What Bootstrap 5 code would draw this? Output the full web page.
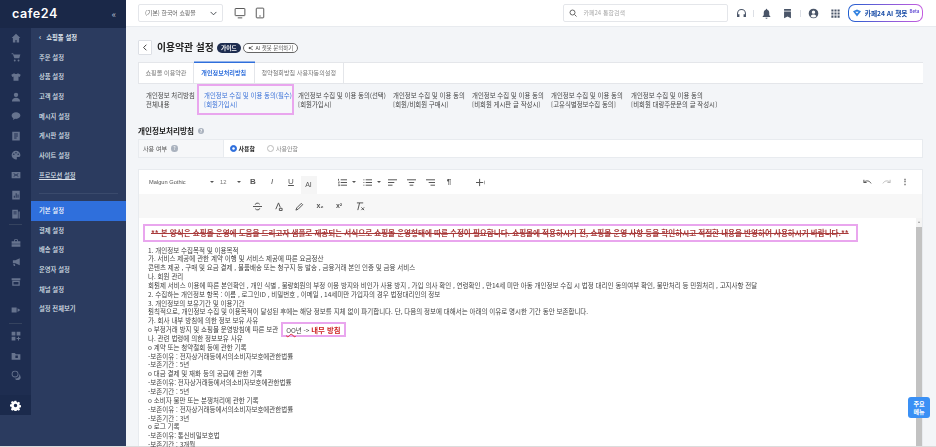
<!doctype html>
<html lang="ko"><head><meta charset="utf-8"><title>이용약관 설정</title>
<link href="https://cdn.jsdelivr.net/npm/bootstrap@5.3.0/dist/css/bootstrap.min.css" rel="stylesheet">
<style>
html,body{height:100%;overflow:hidden}
body{font-family:"Noto Sans CJK KR","Noto Sans",sans-serif;font-size:6.5px;color:#333;background:#f3f5f8;line-height:1.2}
.shell{height:447px;width:936px;border-bottom:1px solid #dcdcdc;filter:blur(.3px)}
.side{width:126px;flex:none;background:#2b3b5f;color:#e6eaf2}
.side-top{height:28px;background:#1a2848;padding:0 10px 0 12px;flex:none}
.logo{font-family:Inter,"Liberation Sans",sans-serif;font-weight:600;font-size:12.6px;letter-spacing:.5px;color:#fff;line-height:1}
.collapse-mark{font-size:9px;color:#b8c0d0;line-height:1}
.side-body{height:419px}
.rail{width:31px;flex:none}
.rail-in{height:367px;background:#1e2d50}
.rail-i{height:19.6px;color:#66738e}
.rail-i svg{width:10px;height:10px;fill:currentColor}
.rail-sep{height:0;border-top:1px solid #35435f;margin:0 9px}
.ri-a{margin-top:8px}.ri-b{margin-top:8px}
.rail-sep.rs-2{margin:4px 9px 2px}
.gear-i{height:20px;background:#1b2a4c;color:#fff}
.gear-i svg{width:11px;height:11px;fill:#fff}
.menu{flex:1}
.menu .list-group-item{background:transparent;border:0;color:#dfe4ec;font-size:6.3px;line-height:19.7px;height:19.7px;padding:0 0 0 8px;font-weight:500;border-radius:0}
.menu .list-group-item.head{font-weight:700}
.menu .list-group-item.now{background:#2f6fdc;color:#fff;height:20px;line-height:20px}
.menu-sep{border-top:1px solid #3a4a6c;margin:7px 8px}
.chev{display:inline-block;margin-right:5px;font-size:7px}
.main-col{min-width:0}
.topbar{height:27px;background:#fff;border-bottom:1px solid #e8ebef;padding:0 13px 0 12px;flex:none}
.shop-sel.form-select{width:85px;height:18px;min-height:0;font-size:5.9px;padding:0 0 0 6px;border-color:#e4e6ea;border-radius:2px;color:#666;background-size:7px;background-position:right 5px center;flex:none}
.dev{color:#555;width:12px;height:12px}
.dev-a{margin:0 8px 0 11px}
.find{width:165px;height:18px;border:1px solid #e4e6ea;border-radius:2px;padding-left:5px;color:#aaa;font-size:6px;background:#fff}
.find span{margin-left:3px}
.t-i{color:#4a5568;width:11px;height:11px;fill:currentColor;flex:none}
.t-line{width:1px;height:7px;background:#dcdfe5;flex:none}
.m8{margin-left:8px}.m6{margin-left:6px}.m7{margin-left:7px}.m10{margin-left:10px}.m11{margin-left:11px}.m75{margin-left:7.5px}
.aibot{width:75px;height:18px;border-radius:7px;border:1.5px solid transparent;background:linear-gradient(#fff,#fff) padding-box,linear-gradient(90deg,#1f5fd0,#7f5cd8,#c45ce0) border-box;color:#1c4fa8;font-weight:700;font-size:6.7px;padding:0;white-space:nowrap;flex:none;gap:3px}
.aibot sup{font-size:4.4px;color:#6b55d6;top:-.6em;font-weight:700}
.body-wrap{padding:0 13.5px 0 12px;min-height:0}
.head-row{height:35px;padding-top:6px;flex:none}
.back.btn{width:14px;height:15px;padding:0;background:#fff;border:1px solid #dcdfe5;border-radius:1px}
.title{font-size:9.8px;font-weight:700;margin:0 3px 0 5px;color:#222;line-height:15px}
.guide.badge{background:#1e2d50;font-size:5.7px;padding:0 5px;height:10px;line-height:10px;font-weight:700;width:24px;display:flex;align-items:center;justify-content:center}
.aiask.btn{height:10px;width:55px;padding:0;font-size:5.4px;line-height:8px;border:1px solid #666;border-radius:6px;color:#555;background:#fff;margin-left:2px;white-space:nowrap;gap:2px}
.tabset.nav-tabs{background:#fff;height:22px;border:0;border-top:1px solid #e4e6ea;border-bottom:1px solid #e4e6ea;flex-wrap:nowrap;flex:none}
.tabset .nav-link{height:20px;font-size:6.1px;padding:0;margin:0;border:0;border-right:1px solid #e4e6ea;border-radius:0;color:#777;text-align:center;line-height:20px;background:#fff}
.tabset .nav-link:first-child{border-left:1px solid #e4e6ea}
.tabset .nav-link.active{color:#2f6fdc;font-weight:700;box-shadow:0 -1.5px 0 #2f6fdc;background:#fff;border-color:#e4e6ea}
.w-a{width:56px}.w-b{width:60.5px}.w-c{width:89.5px}
.subtabs{height:31px;flex:none}
.subt{font-size:6.4px;line-height:9px;color:#444;padding-top:7px;white-space:nowrap;flex:none}
.subt.on{color:#3a72d8;border:2px solid #e9a6ee;padding:5px 0 0 5px;height:31px;width:97px;background:#f6f7fa}
.st-a{margin-left:8px;width:51px}.st-b{margin-left:4px;width:95px}.st-c{width:79px}.st-d{width:80px}
.sec-title{font-size:7.6px;font-weight:700;color:#222;margin:8px 0 0;height:16px;line-height:12px;flex:none}
.hlp{width:6.5px;height:6.5px;border-radius:50%;background:#aab2be;color:#fff;font-size:5px;line-height:6.5px;text-align:center;font-style:normal;flex:none}
.opt-row{height:18.5px;background:#fff;border:1px solid #e8ebef;flex:none}
.opt-label{width:85px;background:#f6f7f9;padding-left:4px;border-right:1px solid #e8ebef;color:#555;font-size:6.1px;flex:none}
.opt-row .form-check{margin:0;padding:0;min-height:0;display:flex;align-items:center;gap:2px;font-size:6px;color:#888}
.opt-row .form-check-input{float:none;margin:0;width:7px;height:7px;border-color:#bbb}
.opt-row .form-check-input:checked{background-color:#2f6fdc;border-color:#2f6fdc}
.opt-row .form-check.sel{font-weight:700;color:#222;margin-left:5.5px}
.opt-row .form-check.unsel{margin-left:12px}
.editor{margin-top:11.5px;background:#fff;border:1px solid #e8ebef;border-bottom:0;flex:1;min-height:0;width:785px}
.bar1{height:24px;padding:0 7.5px 0 10px;flex:none}
.bar2{height:24px;background:#f7f7f7;padding-left:108.5px;flex:none}
.tb{color:#555;display:flex;align-items:center;justify-content:center;flex:none;height:12px;font-size:8px;width:19px;font-family:"Liberation Sans",sans-serif}
.tb svg{width:9px;height:9px;fill:none;stroke:currentColor;stroke-width:1.1}
.tb-b{font-weight:700}.tb-i{font-style:italic}.tb-u{text-decoration:underline}
.tb-off{color:#bbb}
.tb-s{font-size:7px}
.g2{margin-left:2px}.g25{margin-left:2.5px}.g12{margin-left:12px}
.fontname{width:61px;font-family:"Liberation Sans",sans-serif;font-size:5.7px;color:#555;flex:none}
.car{width:0;height:0;border:2px solid transparent;border-top:2.5px solid #555;border-bottom:0;flex:none}
.size12{width:17px;margin-left:6px;font-size:5.8px;color:#777;font-family:"Liberation Sans",sans-serif;flex:none}
.ai-on{height:18px;width:16px;background:#f5f5f5;align-self:flex-end;font-size:7px}
.edit-wrap{min-height:0}
.doc{flex:1;min-width:0;padding:6px 0 0 4px;font-size:6.5px;color:#3f3f3f;height:230px}
.alert-line{border:2px solid #e9a6ee;height:18px;width:715px;padding-left:6px;font-size:7.55px;font-weight:700;color:#a83a3a;line-height:14px;white-space:nowrap;text-decoration:line-through;margin-bottom:3.5px}
.doc p{margin:0 0 0 5px;line-height:8.85px;height:8.85px;white-space:nowrap}
.inl{border:2px solid #e9a6ee;padding:.5px 3px;background:#fff;margin-left:1px}
.inl u{text-decoration:underline wavy #d33}
.inl b{color:#c22;font-size:7.4px}
.sbar{width:6px;flex:none;background:#f4f4f4;padding-top:8.5px;position:relative}
.sbar i{display:block;height:100%;background:#c2c2c2}
.sbar em{position:absolute;top:3px;left:1.5px;width:0;height:0;border:1.5px solid transparent;border-bottom:2px solid #999;border-top:0}
.quick.btn{position:absolute;left:908px;top:397px;width:22px;height:21px;padding:0;background:#3a90f5;border:0;border-radius:3px;color:#fff;font-size:6.1px;line-height:7.4px;font-weight:700}
</style></head><body>
<svg width="0" height="0" class="d-none"><defs>
<symbol id="i-home" viewBox="0 0 16 16"><path d="M8 1 1 8h2v7h4v-4h2v4h4V8h2z"/></symbol>
<symbol id="i-cart" viewBox="0 0 16 16"><path d="M1 2h2.500l.6 2H15l-1.800 6H5.300L3 3.500H1zM6 12a1.500 1.500 0 1 0 0 3 1.500 1.500 0 0 0 0-3zm6 0a1.500 1.500 0 1 0 0 3 1.500 1.500 0 0 0 0-3z"/></symbol>
<symbol id="i-shirt" viewBox="0 0 16 16"><path d="M5 2 0.500 4.500 2 8l2-1v7h8V7l2 1 1.500-3.500L11 2c-.5 1.500-5.500 1.500-6 0z"/></symbol>
<symbol id="i-user" viewBox="0 0 16 16"><circle cx="8" cy="4.500" r="3.500"/><path d="M1.500 15c0-4 3-6 6.500-6s6.500 2 6.500 6z"/></symbol>
<symbol id="i-chat" viewBox="0 0 16 16"><path d="M8 2C4 2 1 4.300 1 7.300c0 1.800 1.100 3.300 2.800 4.300L3 14.500l3.500-2c.5.100 1 .1 1.500.1 4 0 7-2.400 7-5.300S12 2 8 2z"/></symbol>
<symbol id="i-board" viewBox="0 0 16 16"><path fill-rule="evenodd" d="M2 1h12v14H2zm3 3v1.500h6V4zm0 3.200v1.500h6V7.200zm0 3.200v1.500h4v-1.500z"/></symbol>
<symbol id="i-pal" viewBox="0 0 16 16"><path fill-rule="evenodd" d="M8 1a7 7 0 0 0 0 14c1.500 0 1.800-1 1.300-2-.5-1 0-2 1.200-2H13c1.300 0 2-1 2-3a7 7 0 0 0-7-7zM4.500 8a1.200 1.200 0 1 1 0-2.400 1.200 1.200 0 0 1 0 2.400zM8 5.500a1.200 1.200 0 1 1 0-2.400 1.200 1.200 0 0 1 0 2.400zm3.500 2.500a1.200 1.200 0 1 1 0-2.400 1.200 1.200 0 0 1 0 2.400z"/></symbol>
<symbol id="i-tick" viewBox="0 0 16 16"><path fill-rule="evenodd" d="M1 3h14v10H1zm2.500 2.500 3 2.500-3 2.500h1.800L8 8.500l2.700 2H12.500l-3-2.500 3-2.500h-1.800L8 7.500l-2.700-2z"/></symbol>
<symbol id="i-chart" viewBox="0 0 16 16"><path fill-rule="evenodd" d="M2 1h12v14H2zm2.500 8v3.500H6V9zm3-4v7.500H9V5zm3 2v5.500H12V7z"/></symbol>
<symbol id="i-store" viewBox="0 0 16 16"><path fill-rule="evenodd" d="M2 1h9v14H2zm2 3v1.500h5V4zm0 3v1.500h5V7zm8-3h2v11h-2z"/></symbol>
<symbol id="i-bag" viewBox="0 0 16 16"><path d="M5.500 2h5l1 3H15v4H1V5h3.500zM6.500 3.300 6 5h4l-.5-1.700zM1 10h14v4H1z"/></symbol>
<symbol id="i-horn" viewBox="0 0 16 16"><path d="M14 2v11L7 10H3V5h4zM3.500 11h2.500l.8 3.500H4.500z"/></symbol>
<symbol id="i-win" viewBox="0 0 16 16"><path fill-rule="evenodd" d="M1 2h14v3H1zM2 6h12v8H2zm2 2v4h8V8z"/></symbol>
<symbol id="i-arrow" viewBox="0 0 16 16"><path d="M1 4h8v8H1zM10.500 5 15 8l-4.500 3z"/></symbol>
<symbol id="i-plus" viewBox="0 0 16 16"><path d="M1 1h6v6H1zM9 1h6v6H9zM1 9h6v6H1zM11.200 9h1.600v2.200H15v1.600h-2.200V15h-1.600v-2.200H9v-1.600h2.200z"/></symbol>
<symbol id="i-fold" viewBox="0 0 16 16"><path fill-rule="evenodd" d="M1 3h5l2 2h7v9H1zm6 4v4h4V7z"/></symbol>
<symbol id="i-chk" viewBox="0 0 16 16"><path fill-rule="evenodd" d="M6.500 1a5.500 5.500 0 1 0 0 11 5.500 5.500 0 0 0 0-11zm0 1.500a4 4 0 1 1 0 8 4 4 0 0 1 0-8zM13 6.500a5.500 5.500 0 0 1-6.500 7A4.500 4.500 0 0 0 15 10a4.500 4.500 0 0 0-2-3.500z"/></symbol>
<symbol id="i-gear" viewBox="0 0 16 16"><path fill-rule="evenodd" d="M6.700 1h2.600l.4 2 1.300.6 1.800-1.100 1.800 1.800-1.100 1.800.6 1.300 2 .4v2.600l-2 .4-.6 1.300 1.100 1.800-1.800 1.800-1.800-1.100-1.300.6-.4 2H6.700l-.4-2-1.300-.6-1.800 1.100-1.800-1.800L2.500 11l-.6-1.300-2-.4V6.700l2-.4.6-1.300-1.100-1.800 1.800-1.800L5 2.500l1.300-.6zM8 5.500a2.500 2.500 0 1 0 0 5 2.500 2.500 0 0 0 0-5z"/></symbol>
</defs></svg>

<div class="shell d-flex">
 <aside class="side d-flex flex-column">
  <div class="side-top d-flex align-items-center justify-content-between"><span class="logo">cafe24</span><span class="collapse-mark">«</span></div>
  <div class="side-body d-flex">
   <nav class="rail d-flex flex-column">
    <div class="rail-in d-flex flex-column">
     <div class="rail-i d-flex align-items-center justify-content-center"><svg><use href="#i-home"/></svg></div>
     <div class="rail-i d-flex align-items-center justify-content-center"><svg><use href="#i-cart"/></svg></div>
     <div class="rail-i d-flex align-items-center justify-content-center"><svg><use href="#i-shirt"/></svg></div>
     <div class="rail-i d-flex align-items-center justify-content-center"><svg><use href="#i-user"/></svg></div>
     <div class="rail-i d-flex align-items-center justify-content-center"><svg><use href="#i-chat"/></svg></div>
     <div class="rail-i d-flex align-items-center justify-content-center"><svg><use href="#i-board"/></svg></div>
     <div class="rail-i d-flex align-items-center justify-content-center"><svg><use href="#i-pal"/></svg></div>
     <div class="rail-i d-flex align-items-center justify-content-center"><svg><use href="#i-tick"/></svg></div>
     <div class="rail-i d-flex align-items-center justify-content-center"><svg><use href="#i-chart"/></svg></div>
     <div class="rail-i d-flex align-items-center justify-content-center"><svg><use href="#i-store"/></svg></div>
     <div class="rail-sep"></div>
     <div class="rail-i ri-a d-flex align-items-center justify-content-center"><svg><use href="#i-bag"/></svg></div>
     <div class="rail-i d-flex align-items-center justify-content-center"><svg><use href="#i-horn"/></svg></div>
     <div class="rail-i d-flex align-items-center justify-content-center"><svg><use href="#i-win"/></svg></div>
     <div class="rail-i ri-b d-flex align-items-center justify-content-center"><svg><use href="#i-arrow"/></svg></div>
     <div class="rail-sep rs-2"></div>
     <div class="rail-i d-flex align-items-center justify-content-center"><svg><use href="#i-plus"/></svg></div>
     <div class="rail-i d-flex align-items-center justify-content-center"><svg><use href="#i-fold"/></svg></div>
     <div class="rail-i d-flex align-items-center justify-content-center"><svg><use href="#i-chk"/></svg></div>
    </div>
    <div class="gear-i d-flex align-items-center justify-content-center"><svg><use href="#i-gear"/></svg></div>
   </nav>
   <div class="menu list-group list-group-flush">
    <a class="list-group-item head"><span class="chev">‹</span>쇼핑몰 설정</a>
    <a class="list-group-item">주문 설정</a>
    <a class="list-group-item">상품 설정</a>
    <a class="list-group-item">고객 설정</a>
    <a class="list-group-item">메시지 설정</a>
    <a class="list-group-item">게시판 설정</a>
    <a class="list-group-item">사이트 설정</a>
    <a class="list-group-item"><u>프로모션 설정</u></a>
    <div class="menu-sep"></div>
    <a class="list-group-item now">기본 설정</a>
    <a class="list-group-item">결제 설정</a>
    <a class="list-group-item">배송 설정</a>
    <a class="list-group-item">운영자 설정</a>
    <a class="list-group-item">채널 설정</a>
    <a class="list-group-item">설정 전체보기</a>
   </div>
  </div>
 </aside>
 <div class="main-col flex-grow-1 d-flex flex-column">
  <header class="topbar d-flex align-items-center">
   <select class="shop-sel form-select"><option>(기본) 한국어 쇼핑몰</option></select>
   <svg class="dev dev-a" viewBox="0 0 16 16" fill="none" stroke="currentColor" stroke-width="1.300"><rect x="1.500" y="2" width="13" height="9.500" rx=".5"/><path d="M5 14.500h6"/></svg>
   <svg class="dev" viewBox="0 0 16 16" fill="none" stroke="currentColor" stroke-width="1.300"><rect x="3" y="1.500" width="10" height="13" rx="1"/><path d="M7 12h2"/></svg>
   <div class="find d-flex align-items-center gap-1 ms-auto"><svg width="8" height="8" viewBox="0 0 16 16" fill="none" stroke="#666" stroke-width="2"><circle cx="7" cy="7" r="5"/><path d="m11 11 4 4"/></svg><span>카페24 통합검색</span></div>
   <svg class="t-i m8" viewBox="0 0 16 16"><path d="M8 1.500A6.500 6.500 0 0 0 1.500 8v5H5V9H3V8a5 5 0 0 1 10 0v1h-2v4h3.500V8A6.500 6.500 0 0 0 8 1.500z"/></svg>
   <span class="t-line m6"></span>
   <svg class="t-i m7" viewBox="0 0 16 16"><path d="M8 1a1 1 0 0 0-1 1v.6C5 3 4 4.800 4 7v3.500L2.500 12v1h11v-1L12 10.500V7c0-2.200-1-4-3-4.400V2a1 1 0 0 0-1-1zM6.500 14a1.500 1.500 0 0 0 3 0z"/></svg>
   <svg class="t-i m10" viewBox="0 0 16 16"><path d="M3 1.500h10V4H3zM3 5h10v10l-5-2.500L3 15z"/></svg>
   <span class="t-line m7"></span>
   <svg class="t-i m7" viewBox="0 0 16 16"><path fill-rule="evenodd" d="M8 1a7 7 0 1 0 0 14A7 7 0 0 0 8 1zm0 2.500A2.500 2.500 0 1 1 8 8.500a2.500 2.500 0 0 1 0-5zM3.800 12c.6-1.600 2.400-2.500 4.200-2.500s3.600.9 4.200 2.500a5.800 5.800 0 0 1-8.400 0z"/></svg>
   <svg class="t-i m11" viewBox="0 0 16 16"><path d="M2 2h3v3H2zM6.500 2h3v3h-3zM11 2h3v3h-3zM2 6.500h3v3H2zM6.500 6.500h3v3h-3zM11 6.500h3v3h-3zM2 11h3v3H2zM6.500 11h3v3h-3zM11 11h3v3h-3z"/></svg>
   <button class="aibot btn d-flex align-items-center justify-content-center m75"><svg width="10" height="8" viewBox="0 0 16 14"><path d="M1 4 8 1l7 3-7 9z" fill="#2d7fe0"/><path d="M5 5h6L8 8z" fill="#fff"/></svg><span>카페24 AI 챗봇 <sup>Beta</sup></span></button>
  </header>
  <main class="body-wrap flex-grow-1 d-flex flex-column">
   <div class="head-row d-flex align-items-center">
    <button class="back btn d-flex align-items-center justify-content-center"><svg width="6" height="7" viewBox="0 0 8 10" fill="none" stroke="#333" stroke-width="1.300"><path d="M6 1 2 5l4 4"/></svg></button>
    <h1 class="title">이용약관 설정</h1>
    <span class="guide badge rounded-pill">가이드</span>
    <button class="aiask btn d-flex align-items-center justify-content-center"><svg width="6" height="6" viewBox="0 0 10 10" fill="none" stroke="#444" stroke-width="1.200"><path d="M8 2 2.500 5 8 8"/><circle cx="2.500" cy="5" r="1" fill="#444"/></svg><span>AI 챗봇 문의하기</span></button>
   </div>
   <ul class="tabset nav nav-tabs">
    <li class="nav-link w-a">쇼핑몰 이용약관</li>
    <li class="nav-link active w-b">개인정보처리방침</li>
    <li class="nav-link w-c">청약철회방침 사용자동의설정</li>
   </ul>
   <div class="subtabs d-flex">
    <div class="subt st-a">개인정보 처리방침<br>전체내용</div>
    <div class="subt on">개인정보 수집 및 이용 동의(필수)<br>[회원가입시]</div>
    <div class="subt st-b">개인정보 수집 및 이용 동의(선택)<br>[회원가입시]</div>
    <div class="subt st-c">개인정보 수집 및 이용 동의<br>[회원/비회원 구매시]</div>
    <div class="subt st-c">개인정보 수집 및 이용 동의<br>[비회원 게시판 글 작성시]</div>
    <div class="subt st-d">개인정보 수집 및 이용 동의<br>[고유식별정보수집 동의]</div>
    <div class="subt">개인정보 수집 및 이용 동의<br>[비회원 대량주문문의 글 작성시]</div>
   </div>
   <div class="sec-title d-flex align-items-center gap-1">개인정보처리방침 <i class="hlp">?</i></div>
   <div class="opt-row d-flex align-items-center">
    <div class="opt-label h-100 d-flex align-items-center gap-1">사용 여부 <i class="hlp">?</i></div>
    <div class="form-check sel"><input class="form-check-input" type="radio" name="u" id="u1" checked><label for="u1">사용함</label></div>
    <div class="form-check unsel"><input class="form-check-input" type="radio" name="u" id="u2"><label for="u2">사용안함</label></div>
   </div>
   <section class="editor d-flex flex-column">
    <div class="bar1 d-flex align-items-center">
     <span class="fontname">Malgun Gothic</span><span class="car"></span><span class="size12">12</span><span class="car"></span>
     <span class="tb tb-b g25">B</span><span class="tb tb-i">I</span><span class="tb tb-u">U</span><span class="tb ai-on">AI</span>
     <span class="tb ms-3"><svg viewBox="0 0 10 10"><path d="M3 2h7M3 5h7M3 8h7M.5 1v2M.5 4.500h1l-1 1h1M.5 7.500h1v1h-1"/></svg></span><span class="car"></span>
     <span class="tb g2"><svg viewBox="0 0 10 10"><path d="M3 2h7M3 5h7M3 8h7M.5 2h1M.5 5h1M.5 8h1"/></svg></span><span class="car"></span>
     <span class="tb g2"><svg viewBox="0 0 10 10"><path d="M0 2h10M0 5h7M0 8h5"/></svg></span>
     <span class="tb"><svg viewBox="0 0 10 10"><path d="M0 2h10M2 5h6M3 8h4"/></svg></span>
     <span class="tb"><svg viewBox="0 0 10 10"><path d="M0 2h10M3 5h7M5 8h5"/></svg></span>
     <span class="tb tb-b">¶</span>
     <span class="tb g12"><svg viewBox="0 0 10 10"><path d="M4 1v8M0 5h8M10 3v4"/></svg></span>
     <span class="tb ms-auto"><svg viewBox="0 0 10 10"><path d="M1 2v3h3M1 5c2-2.500 6-2.500 8 1"/></svg></span>
     <span class="tb tb-off"><svg viewBox="0 0 10 10"><path d="M9 2v3H6M9 5C7 2.500 3 2.500 1 6"/></svg></span>
     <span class="tb tb-b">⋮</span>
    </div>
    <div class="bar2 d-flex align-items-center">
     <span class="tb"><svg viewBox="0 0 10 10"><path d="M0 5h10M7.500 2.500C6 .5 2.500 1 2.500 3M2.500 7.500C4 9.500 7.500 9 7.500 7"/></svg></span>
     <span class="tb g2"><svg viewBox="0 0 10 10"><path d="M2 8 5 1l2 5M6 7h3v2.500H6z"/></svg></span>
     <span class="tb g2"><svg viewBox="0 0 10 10"><path d="M1 9 2 6.500 7 1.500l1.500 1.500-5 5z"/></svg></span>
     <span class="tb g2 tb-b tb-s">x₂</span>
     <span class="tb tb-b tb-s">x²</span>
     <span class="tb g2"><svg viewBox="0 0 10 10"><path d="M1 1h7M4 1l-2 8M6 6l3 3M9 6 6 9"/></svg></span>
    </div>
    <div class="edit-wrap d-flex flex-grow-1">
     <div class="doc">
      <div class="alert-line">** 본 양식은 쇼핑몰 운영에 도움을 드리고자 샘플로 제공되는 서식으로 쇼핑몰 운영형태에 따른 수정이 필요합니다. 쇼핑몰에 적용하시기 전, 쇼핑몰 운영 사항 등을 확인하시고 적절한 내용을 반영하여 사용하시기 바랍니다.**</div>
      <p>1. 개인정보 수집목적 및 이용목적</p>
      <p>가. 서비스 제공에 관한 계약 이행 및 서비스 제공에 따른 요금정산</p>
      <p>콘텐츠 제공 , 구매 및 요금 결제 , 물품배송 또는 청구지 등 발송 , 금융거래 본인 인증 및 금융 서비스</p>
      <p>나. 회원 관리</p>
      <p>회원제 서비스 이용에 따른 본인확인 , 개인 식별 , 불량회원의 부정 이용 방지와 비인가 사용 방지 , 가입 의사 확인 , 연령확인 , 만14세 미만 아동 개인정보 수집 시 법정 대리인 동의여부 확인, 불만처리 등 민원처리 , 고지사항 전달</p>
      <p>2. 수집하는 개인정보 항목 : 이름 , 로그인ID , 비밀번호 , 이메일 , 14세미만 가입자의 경우 법정대리인의 정보</p>
      <p>3. 개인정보의 보유기간 및 이용기간</p>
      <p>원칙적으로, 개인정보 수집 및 이용목적이 달성된 후에는 해당 정보를 지체 없이 파기합니다. 단, 다음의 정보에 대해서는 아래의 이유로 명시한 기간 동안 보존합니다.</p>
      <p>가. 회사 내부 방침에 의한 정보 보유 사유</p>
      <p>o 부정거래 방지 및 쇼핑몰 운영방침에 따른 보관 <span class="inl"><u>OO</u>년 -&gt; <b>내부 방침</b></span></p>
      <p>나. 관련 법령에 의한 정보보유 사유</p>
      <p>o 계약 또는 청약철회 등에 관한 기록</p>
      <p>-보존이유 : 전자상거래등에서의소비자보호에관한법률</p>
      <p>-보존기간 : 5년</p>
      <p>o 대금 결제 및 재화 등의 공급에 관한 기록</p>
      <p>-보존이유: 전자상거래등에서의소비자보호에관한법률</p>
      <p>-보존기간 : 5년</p>
      <p>o 소비자 불만 또는 분쟁처리에 관한 기록</p>
      <p>-보존이유 : 전자상거래등에서의소비자보호에관한법률</p>
      <p>-보존기간 : 3년</p>
      <p>o 로그 기록</p>
      <p>-보존이유: 통신비밀보호법</p>
      <p>-보존기간 : 3개월</p>
     </div>
     <div class="sbar"><em></em><i></i></div>
    </div>
   </section>
  </main>
 </div>
</div>
<button class="quick btn">주요<br>메뉴</button>
<script src="https://cdn.jsdelivr.net/npm/bootstrap@5.3.0/dist/js/bootstrap.bundle.min.js"></script>
</body></html>
